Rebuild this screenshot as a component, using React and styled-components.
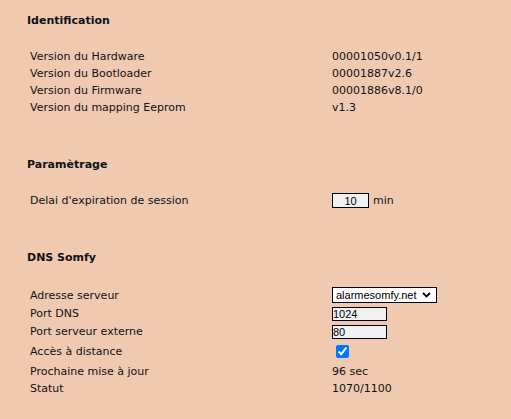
import React from "react";
import styled, { createGlobalStyle } from "styled-components";

const Global = createGlobalStyle`
  html, body { margin: 0; padding: 0; background: #efcab1; }
  body { font-family: "DejaVu Sans", Verdana, sans-serif; font-size: 11px; color: #111; }
`;

const Page = styled.div`
  width: 511px;
  height: 419px;
  box-sizing: border-box;
  padding: 14px 0 0 27px;
  background: #efcab1;
  overflow: hidden;
`;

const Section = styled.section`
  margin-bottom: ${(p) => p.$after || 42}px;
`;

const Heading = styled.div`
  font-weight: bold;
  line-height: 13px;
  height: 13px;
  margin-bottom: 21px;
`;

const Row = styled.div`
  display: grid;
  grid-template-columns: 302px auto;
  align-items: center;
  height: ${(p) => p.$h || 17}px;
  line-height: 13px;
  padding-left: 3px;
  white-space: nowrap;
`;

const Label = styled.span``;
const Value = styled.span`
  display: flex;
  align-items: center;
`;

const TextBox = styled.input`
  box-sizing: border-box;
  width: ${(p) => p.$w}px;
  height: ${(p) => p.$hh || 14}px;
  margin: 0;
  padding: 0;
  border: 1px solid #000;
  background: #f1f1f1;
  font-family: "Liberation Sans", Arial, sans-serif;
  font-size: 11px;
  color: #000;
  text-align: ${(p) => (p.$center ? "center" : "left")};
  outline: none;
`;

const Unit = styled.span`
  margin-left: 4px;
`;

const SelectWrap = styled.span`
  position: relative;
  display: inline-block;
`;

const Select = styled.select`
  appearance: none;
  -webkit-appearance: none;
  box-sizing: border-box;
  width: 105px;
  height: 16px;
  margin: 0;
  padding: 0 0 0 3px;
  border: 1px solid #000;
  border-radius: 0;
  background: #fff;
  font-family: "Liberation Sans", Arial, sans-serif;
  font-size: 11px;
  line-height: 14px;
  color: #000;
`;

const Chevron = styled.svg`
  position: absolute;
  right: 6px;
  top: 5px;
  pointer-events: none;
`;

const Check = styled.input`
  width: 13px;
  height: 13px;
  margin: 3px 3px 3px 4px;
  accent-color: #0075ff;
`;

export default function App() {
  return (
    <Page>
      <Global />
      <Section>
        <Heading>Identification</Heading>
        <Row><Label>Version du Hardware</Label><Value>00001050v0.1/1</Value></Row>
        <Row><Label>Version du Bootloader</Label><Value>00001887v2.6</Value></Row>
        <Row><Label>Version du Firmware</Label><Value>00001886v8.1/0</Value></Row>
        <Row><Label>Version du mapping Eeprom</Label><Value>v1.3</Value></Row>
      </Section>
      <Section>
        <Heading>Paramètrage</Heading>
        <Row>
          <Label>Delai d'expiration de session</Label>
          <Value>
            <TextBox $w={37} $hh={15} $center defaultValue="10" />
            <Unit>min</Unit>
          </Value>
        </Row>
      </Section>
      <Section>
        <Heading>DNS Somfy</Heading>
        <Row $h={20}>
          <Label>Adresse serveur</Label>
          <Value>
            <SelectWrap>
              <Select defaultValue="alarmesomfy.net">
                <option>alarmesomfy.net</option>
              </Select>
              <Chevron width="9" height="6" viewBox="0 0 9 6">
                <path d="M1 1 L4.5 4.5 L8 1" fill="none" stroke="#000" strokeWidth="1.8" />
              </Chevron>
            </SelectWrap>
          </Value>
        </Row>
        <Row $h={17}>
          <Label>Port DNS</Label>
          <Value><TextBox $w={55} defaultValue="1024" /></Value>
        </Row>
        <Row $h={19}>
          <Label>Port serveur externe</Label>
          <Value><TextBox $w={55} defaultValue="80" /></Value>
        </Row>
        <Row $h={21}>
          <Label>Accès à distance</Label>
          <Value><Check type="checkbox" defaultChecked /></Value>
        </Row>
        <Row $h={18}>
          <Label>Prochaine mise à jour</Label>
          <Value>96 sec</Value>
        </Row>
        <Row $h={17}>
          <Label>Statut</Label>
          <Value>1070/1100</Value>
        </Row>
      </Section>
    </Page>
  );
}
